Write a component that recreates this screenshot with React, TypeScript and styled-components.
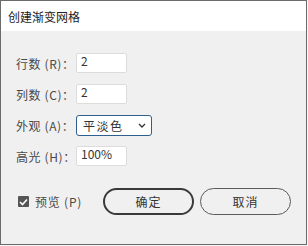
import React from "react";
import styled, { createGlobalStyle } from "styled-components";

const Global = createGlobalStyle`
  html, body { margin: 0; padding: 0; background: #f7f7f7; }
  body { font-family: "Noto Sans CJK SC", "Noto Sans", sans-serif; }
`;

const Window = styled.div`
  width: 307px;
  height: 245px;
  box-sizing: border-box;
  border: 1px solid #6b6b6b;
  background: #f0f0f0;
  display: flex;
  flex-direction: column;
`;

const TitleBar = styled.div`
  height: 30px;
  background: #ffffff;
  display: flex;
  align-items: center;
  padding-left: 7px;
  font-size: 12px;
  color: #222;
  flex-shrink: 0;
`;

const Body = styled.div`
  flex: 1;
  display: flex;
  flex-direction: column;
  padding: 22px 15px 0 15px;
`;

const Fields = styled.div`
  display: flex;
  flex-direction: column;
  gap: 10px;
`;

const Row = styled.div`
  display: flex;
  align-items: center;
  height: 21px;
`;

const Label = styled.span`
  width: 60px;
  font-size: 12px;
  color: #4a4a4a;
  white-space: nowrap;
  letter-spacing: 0.6px;
`;

const TextBox = styled.div`
  width: 51px;
  height: 20px;
  box-sizing: border-box;
  background: #fff;
  border: 1px solid #dcdcdc;
  border-radius: 2px;
  padding: 0 0 0 4px;
  font-size: 12px;
  line-height: 14px;
  color: #333;
  align-self: flex-start;
`;

const Select = styled.div`
  width: 76px;
  height: 21px;
  box-sizing: border-box;
  background: #fff;
  border: 1px solid #2e5f8f;
  border-radius: 3px;
  display: flex;
  align-items: center;
  justify-content: space-between;
  padding: 0 5px 0 6px;
  font-size: 12px;
  color: #333;
  letter-spacing: 1.5px;
`;

const Footer = styled.div`
  display: flex;
  align-items: center;
  margin-top: 21px;
`;

const Check = styled.label`
  display: flex;
  align-items: center;
  gap: 6px;
  padding-left: 2px;
  font-size: 12px;
  color: #4a4a4a;
  letter-spacing: 0.8px;
`;

const Box = styled.span`
  width: 11px;
  height: 11px;
  background: #555;
  border-radius: 1px;
  display: inline-flex;
  align-items: center;
  justify-content: center;
`;

const Buttons = styled.div`
  margin-left: auto;
  display: flex;
  gap: 6px;
`;

const Button = styled.button<{ $primary?: boolean }>`
  width: 91px;
  height: 27px;
  box-sizing: border-box;
  border-radius: 14px;
  background: transparent;
  border: ${(p) => (p.$primary ? "2px solid #3a3a3a" : "1px solid #5a5a5a")};
  font-family: inherit;
  font-size: 12px;
  color: #333;
  padding: 0;
  letter-spacing: 1px;
`;

export default function App() {
  return (
    <>
      <Global />
      <Window>
        <TitleBar>创建渐变网格</TitleBar>
        <Body>
          <Fields>
            <Row>
              <Label>行数 (R)：</Label>
              <TextBox>2</TextBox>
            </Row>
            <Row>
              <Label>列数 (C)：</Label>
              <TextBox>2</TextBox>
            </Row>
            <Row>
              <Label>外观 (A)：</Label>
              <Select>
                平淡色
                <svg width="8" height="5" viewBox="0 0 8 5">
                  <path d="M1 1 L4 4 L7 1" fill="none" stroke="#333" strokeWidth="1.3" />
                </svg>
              </Select>
            </Row>
            <Row>
              <Label>高光 (H)：</Label>
              <TextBox>100%</TextBox>
            </Row>
          </Fields>
          <Footer>
            <Check>
              <Box>
                <svg width="9" height="8" viewBox="0 0 9 8">
                  <path d="M1 4 L3.5 6.5 L8 1.5" fill="none" stroke="#fff" strokeWidth="1.6" />
                </svg>
              </Box>
              预览 (P)
            </Check>
            <Buttons>
              <Button $primary>确定</Button>
              <Button>取消</Button>
            </Buttons>
          </Footer>
        </Body>
      </Window>
    </>
  );
}
